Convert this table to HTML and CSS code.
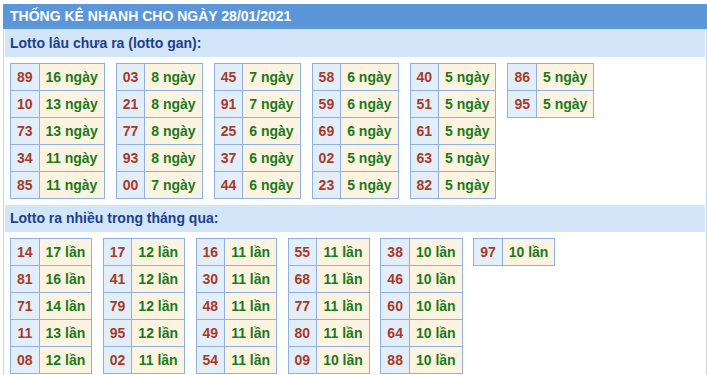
FILE: index.html
```html
<!DOCTYPE html>
<html lang="vi">
<head>
<meta charset="utf-8">
<title>Thống kê nhanh</title>
<link rel="stylesheet" href="styles.css">
</head>
<body>
<div class="wrap">
  <div class="title">THỐNG KÊ NHANH CHO NGÀY 28/01/2021</div>
  <div class="sub">Lotto lâu chưa ra (lotto gan):</div>
  <div class="tables gan">
    <table class="tk"><tr><td class="n">89</td><td class="v">16 ngày</td></tr><tr><td class="n">10</td><td class="v">13 ngày</td></tr><tr><td class="n">73</td><td class="v">13 ngày</td></tr><tr><td class="n">34</td><td class="v">11 ngày</td></tr><tr><td class="n">85</td><td class="v">11 ngày</td></tr></table>
    <table class="tk"><tr><td class="n">03</td><td class="v">8 ngày</td></tr><tr><td class="n">21</td><td class="v">8 ngày</td></tr><tr><td class="n">77</td><td class="v">8 ngày</td></tr><tr><td class="n">93</td><td class="v">8 ngày</td></tr><tr><td class="n">00</td><td class="v">7 ngày</td></tr></table>
    <table class="tk"><tr><td class="n">45</td><td class="v">7 ngày</td></tr><tr><td class="n">91</td><td class="v">7 ngày</td></tr><tr><td class="n">25</td><td class="v">6 ngày</td></tr><tr><td class="n">37</td><td class="v">6 ngày</td></tr><tr><td class="n">44</td><td class="v">6 ngày</td></tr></table>
    <table class="tk"><tr><td class="n">58</td><td class="v">6 ngày</td></tr><tr><td class="n">59</td><td class="v">6 ngày</td></tr><tr><td class="n">69</td><td class="v">6 ngày</td></tr><tr><td class="n">02</td><td class="v">5 ngày</td></tr><tr><td class="n">23</td><td class="v">5 ngày</td></tr></table>
    <table class="tk"><tr><td class="n">40</td><td class="v">5 ngày</td></tr><tr><td class="n">51</td><td class="v">5 ngày</td></tr><tr><td class="n">61</td><td class="v">5 ngày</td></tr><tr><td class="n">63</td><td class="v">5 ngày</td></tr><tr><td class="n">82</td><td class="v">5 ngày</td></tr></table>
    <table class="tk"><tr><td class="n">86</td><td class="v">5 ngày</td></tr><tr><td class="n">95</td><td class="v">5 ngày</td></tr></table>
  </div>
  <div class="sub sub2">Lotto ra nhiều trong tháng qua:</div>
  <div class="tables nhieu">
    <table class="tk"><tr><td class="n">14</td><td class="v">17 lần</td></tr><tr><td class="n">81</td><td class="v">16 lần</td></tr><tr><td class="n">71</td><td class="v">14 lần</td></tr><tr><td class="n">11</td><td class="v">13 lần</td></tr><tr><td class="n">08</td><td class="v">12 lần</td></tr></table>
    <table class="tk"><tr><td class="n">17</td><td class="v">12 lần</td></tr><tr><td class="n">41</td><td class="v">12 lần</td></tr><tr><td class="n">79</td><td class="v">12 lần</td></tr><tr><td class="n">95</td><td class="v">12 lần</td></tr><tr><td class="n">02</td><td class="v">11 lần</td></tr></table>
    <table class="tk"><tr><td class="n">16</td><td class="v">11 lần</td></tr><tr><td class="n">30</td><td class="v">11 lần</td></tr><tr><td class="n">48</td><td class="v">11 lần</td></tr><tr><td class="n">49</td><td class="v">11 lần</td></tr><tr><td class="n">54</td><td class="v">11 lần</td></tr></table>
    <table class="tk"><tr><td class="n">55</td><td class="v">11 lần</td></tr><tr><td class="n">68</td><td class="v">11 lần</td></tr><tr><td class="n">77</td><td class="v">11 lần</td></tr><tr><td class="n">80</td><td class="v">11 lần</td></tr><tr><td class="n">09</td><td class="v">10 lần</td></tr></table>
    <table class="tk"><tr><td class="n">38</td><td class="v">10 lần</td></tr><tr><td class="n">46</td><td class="v">10 lần</td></tr><tr><td class="n">60</td><td class="v">10 lần</td></tr><tr><td class="n">64</td><td class="v">10 lần</td></tr><tr><td class="n">88</td><td class="v">10 lần</td></tr></table>
    <table class="tk"><tr><td class="n">97</td><td class="v">10 lần</td></tr></table>
  </div>
</div>
</body>
</html>
```
FILE: styles.css
```css
html, body {
  margin: 0;
  padding: 0;
  background: #ffffff;
}
body {
  padding: 4px 0 0 3px;
  font-family: "Liberation Sans", Arial, sans-serif;
  font-size: 14px;
}
.wrap {
  width: 702px;
  border-left: 1px solid #c6d6ec;
  border-right: 1px solid #c6d6ec;
  padding-bottom: 40px;
}
.title {
  margin: 0 -1px;
  height: 25px;
  line-height: 25px;
  padding-left: 7px;
  background: #5b96d8;
  color: #ffffff;
  font-weight: bold;
  font-size: 14px;
}
.sub {
  margin: 0 1px;
  height: 28px;
  line-height: 28px;
  padding-left: 5px;
  background: #d3e6f9;
  color: #1d3f8c;
  font-weight: bold;
  font-size: 14px;
}
.sub2 {
  height: 27px;
  line-height: 27px;
}
.tables {
  display: flex;
  align-items: flex-start;
  padding: 6px 0 6px 6px;
}
.gan {
  gap: 11px;
}
.nhieu {
  gap: 10.5px;
}
.tk {
  border-collapse: collapse;
  font-weight: bold;
  font-size: 14px;
}
.tk td {
  border: 1px solid #90b0e2;
  height: 27px;
  padding: 0 6px;
  text-align: center;
  white-space: nowrap;
  box-sizing: border-box;
  line-height: 16px;
}
.tk .n {
  background: #e3eefb;
  color: #a83a26;
}
.tk .v {
  background: #fdf3e1;
  color: #1b7a1b;
}
```
